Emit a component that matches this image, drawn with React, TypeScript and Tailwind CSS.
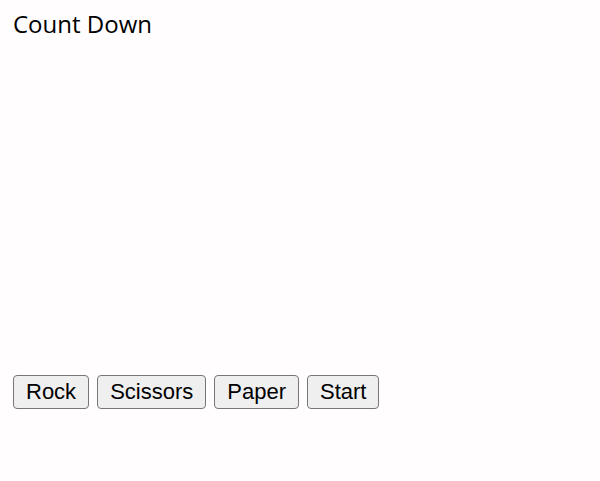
import React from "react";

export default function App() {
  const btn =
    "h-[34px] px-[12px] bg-[#efefef] border border-[#767676] rounded-[4px] text-[22px] leading-none text-black";
  return (
    <div className="w-[600px] h-[481px] bg-[#fffdfe] px-[13px] pt-[6px]">
      <div className="text-[24px] text-black" style={{ fontFamily: '"Open Sans", sans-serif' }}>
        Count Down
      </div>
      <div className="mt-[333px] flex gap-[8px]" style={{ fontFamily: '"Liberation Sans", Arial, sans-serif' }}>
        <button className={btn}>Rock</button>
        <button className={btn}>Scissors</button>
        <button className={btn}>Paper</button>
        <button className={btn}>Start</button>
      </div>
    </div>
  );
}
